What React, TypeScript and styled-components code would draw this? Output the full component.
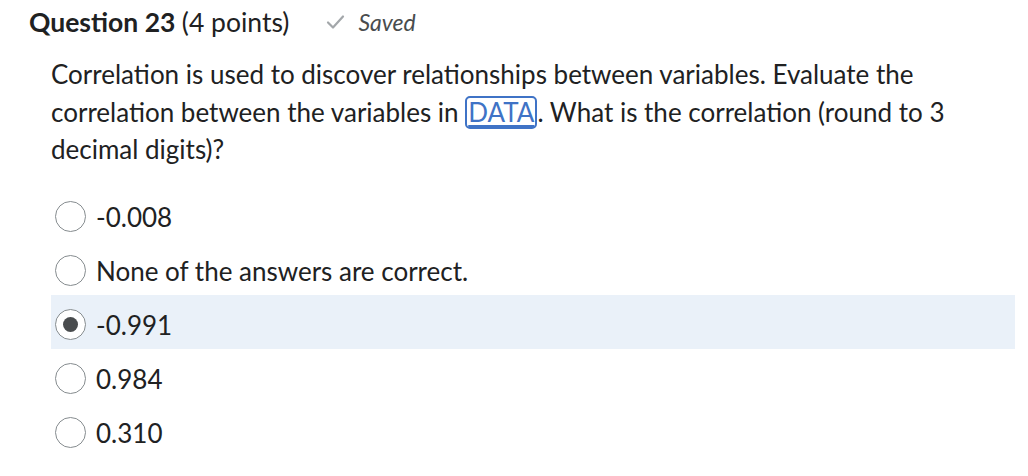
import React from "react";
import styled, {createGlobalStyle} from "styled-components";

const GlobalStyle = createGlobalStyle`
  body {
    margin: 0;
    background: #ffffff;
    font-family: Lato, "Open Sans", sans-serif;
    color: #202122;
  }
`;

const Page = styled.div`
  width: 1028px;
  height: 476px;
  padding: 3px 0 0 29px;
  box-sizing: border-box;
  overflow: hidden;
`;

const TitleRow = styled.div`
  display: flex;
  align-items: center;
  height: 38px;
`;

const Title = styled.h2`
  margin: 0;
  font-size: 26.5px;
  font-weight: 700;
  color: #202122;

  span {
    font-weight: 400;
  }
`;

const SavedTag = styled.div`
  display: flex;
  align-items: center;
  gap: 13px;
  margin-left: 37px;
  font-size: 23px;
  font-style: italic;
  color: #494c4e;
`;

const Body = styled.div`
  padding-left: 22px;
`;

const Prompt = styled.p`
  margin: 15px 0 18px 0;
  width: 964px;
  font-size: 26px;
  line-height: 37.5px;
`;

const DataLink = styled.a`
  display: inline-block;
  line-height: 29px;
  padding: 0 1px;
  border: 2px solid #3f73c6;
  border-radius: 5px;
  color: #3f73c6;
  text-decoration: underline;
  text-underline-offset: 3px;
`;

const Options = styled.div`
  display: flex;
  flex-direction: column;
  width: 964px;
`;

const Option = styled.label<{$selected?: boolean}>`
  display: flex;
  align-items: center;
  gap: 10px;
  height: 54px;
  padding: 6px 0 0 4px;
  box-sizing: border-box;
  background: ${p => (p.$selected ? "#eaf1f9" : "transparent")};
  font-size: 26px;
`;

const Radio = styled.span<{$checked?: boolean}>`
  width: 31px;
  height: 31px;
  box-sizing: border-box;
  border-radius: 50%;
  border: 1px solid #868c8f;
  background: #ffffff;
  display: flex;
  align-items: center;
  justify-content: center;

  &::after {
    content: "";
    width: 15px;
    height: 15px;
    border-radius: 50%;
    background: #494c4e;
    display: ${p => (p.$checked ? "block" : "none")};
  }
`;

const answers = ["-0.008", "None of the answers are correct.", "-0.991", "0.984", "0.310"];

export default function App() {
  return (
    <>
      <GlobalStyle />
      <Page>
        <TitleRow>
          <Title>
            Question 23 <span>(4 points)</span>
          </Title>
          <SavedTag>
            <svg width="19" height="16" viewBox="0 0 19 16">
              <path d="M2 8.5 L7 13.5 L17 2.5" fill="none" stroke="#a3a7aa" strokeWidth="2.2" strokeLinecap="round" strokeLinejoin="round" />
            </svg>
            Saved
          </SavedTag>
        </TitleRow>
        <Body>
          <Prompt>
            Correlation is used to discover relationships between variables. Evaluate the correlation between the
            variables in <DataLink href="#">DATA</DataLink>. What is the correlation (round to 3 decimal digits)?
          </Prompt>
          <Options>
            {answers.map((a, idx) => (
              <Option key={a} $selected={idx === 2}>
                <Radio $checked={idx === 2} />
                {a}
              </Option>
            ))}
          </Options>
        </Body>
      </Page>
    </>
  );
}
